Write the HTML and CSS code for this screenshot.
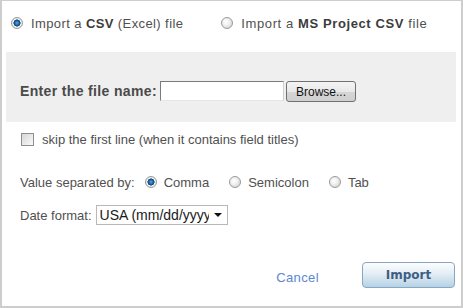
FILE: index.html
```html
<!DOCTYPE html>
<html lang="en">
  <head>
    <meta charset="UTF-8">
    <title>Import CSV</title>
    <link rel="stylesheet" href="styles.css">
  </head>
  <body>
    <div class="dialog">
      <div class="source-row">
        <label class="choice"><input type="radio" name="source" checked> <span>Import a <b>CSV</b> (Excel) file</span></label>
        <label class="choice"><input type="radio" name="source"> <span>Import a <b>MS Project CSV</b> file</span></label>
      </div>

      <div class="file-panel">
        <span class="file-label">Enter the file name:</span>
        <input type="text" class="file-input">
        <button class="browse-btn">Browse...</button>
      </div>

      <div class="options">
        <label class="check-row"><input type="checkbox"> <span>skip the first line (when it contains field titles)</span></label>

        <div class="sep-row">
          <span class="sep-label">Value separated by:</span>
          <label class="sep"><input type="radio" name="sep" checked> <span>Comma</span></label>
          <label class="sep"><input type="radio" name="sep"> <span>Semicolon</span></label>
          <label class="sep"><input type="radio" name="sep"> <span>Tab</span></label>
        </div>

        <div class="date-row">
          <span class="date-label">Date format:</span>
          <div class="select-wrap">
            <select class="date-select">
              <option>USA (mm/dd/yyyy)</option>
              <option>Europe (dd/mm/yyyy)</option>
            </select>
            <svg class="select-arrow" width="8" height="4" viewBox="0 0 8 4"><path d="M0 0h8L4 4z" fill="#111"/></svg>
          </div>
        </div>
      </div>

      <div class="footer">
        <a href="#" class="cancel-link">Cancel</a>
        <button class="import-btn">Import</button>
      </div>
    </div>
  </body>
</html>
```

FILE: styles.css
```css
body {
  margin: 0;
  font-family: "Liberation Sans", Arial, sans-serif;
  font-size: 13px;
  color: #505050;
  background: #fff;
}
.dialog {
  width: 463px;
  height: 308px;
  box-sizing: border-box;
  border: 2px solid #cdcdcd;
  border-top-width: 1px;
}
label {
  display: flex;
  align-items: center;
}
b {
  color: #3c3c3c;
}
input[type="radio"] {
  appearance: none;
  width: 12px;
  height: 12px;
  margin: 0;
  border: 1px solid #9a9a9a;
  border-radius: 50%;
  background: radial-gradient(circle at 40% 40%, #fff 0, #f2f2f2 3px, #d4d4d4 7px);
  flex: none;
}
input[type="radio"]:checked {
  background: radial-gradient(circle at 50% 50%, #5ea6e0 0, #1d6bb0 2px, #0c3f70 3.3px, #f4f4f4 3.8px, #d4d4d4 7px);
}
input[type="checkbox"] {
  appearance: none;
  width: 13px;
  height: 13px;
  margin: 0;
  border: 1px solid #8e8e8e;
  box-sizing: border-box;
  background: linear-gradient(135deg, #d6d6d6, #fafafa);
  flex: none;
}

/* top source choices */
.source-row {
  display: flex;
  height: 51px;
  box-sizing: border-box;
  padding: 15px 0 0 9px;
  gap: 38px;
  letter-spacing: 0.4px;
}
.source-row .choice {
  gap: 8px;
  height: 14px;
}
.source-row .choice + .choice {
  letter-spacing: 0.6px;
}

/* file panel */
.file-panel {
  height: 70px;
  margin: 0 5px 0 4px;
  background: #efefef;
  box-sizing: border-box;
  padding: 29px 0 0 14px;
  display: flex;
  align-items: flex-start;
}
.file-label {
  font-size: 14px;
  font-weight: bold;
  letter-spacing: 0.35px;
  line-height: 20px;
  width: 140px;
  color: #4a4a4a;
}
.file-input {
  width: 124px;
  height: 20px;
  box-sizing: border-box;
  margin: 0 2px 0 0;
  border: 1px solid #7a7a7a;
  border-right-color: #d0d0d0;
  border-bottom-color: #e6e6e6;
  background: #fff;
  padding: 0 2px;
}
.browse-btn {
  width: 70px;
  height: 21px;
  margin: 0;
  padding: 0;
  font-family: "Liberation Sans", Arial, sans-serif;
  font-size: 12px;
  color: #111;
  border: 1px solid #707070;
  border-radius: 3px;
  background: linear-gradient(#f4f4f4 0%, #e8e8e8 50%, #d6d6d6 51%, #cfcfcf 100%);
}

/* options */
.options {
  padding-left: 18px;
}
.check-row {
  margin-top: 7px;
  height: 20px;
  gap: 8px;
  padding-left: 1px;
}
.sep-row {
  margin-top: 23px;
  height: 20px;
  display: flex;
  align-items: center;
}
.sep-label {
  margin-right: 10px;
}
.sep {
  gap: 7px;
  margin-right: 20px;
}
.date-row {
  margin-top: 13px;
  height: 20px;
  display: flex;
  align-items: center;
}
.date-label {
  margin-right: 4px;
}
.select-wrap {
  position: relative;
  width: 132px;
  height: 20px;
}
.date-select {
  appearance: none;
  width: 132px;
  height: 20px;
  margin: 0;
  box-sizing: border-box;
  border: 1px solid #b8b8b8;
  background: #fff;
  padding: 0 18px 0 3px;
  font-family: "Liberation Sans", Arial, sans-serif;
  font-size: 14px;
  color: #1a1a1a;
}
.select-arrow {
  position: absolute;
  right: 6px;
  top: 8px;
  pointer-events: none;
}

/* footer */
.footer {
  margin-top: 37px;
  height: 26px;
  display: flex;
  justify-content: flex-end;
  align-items: center;
  padding-right: 6px;
}
.cancel-link {
  color: #5b87d2;
  font-size: 13px;
  letter-spacing: 0.4px;
  text-decoration: none;
  margin-right: 43px;
  margin-top: 5px;
}
.import-btn {
  width: 93px;
  height: 26px;
  margin: 0;
  padding: 0;
  border: 1px solid #86a8c4;
  border-radius: 4px;
  background: linear-gradient(#fdfdfe 0%, #e6f0f6 40%, #b6d2e4 100%);
  font-family: "DejaVu Sans", Verdana, sans-serif;
  font-weight: bold;
  font-size: 12px;
  color: #3e5e86;
}
```
